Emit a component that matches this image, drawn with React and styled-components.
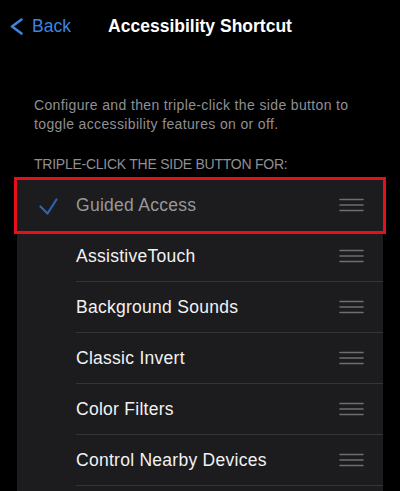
import styled, { createGlobalStyle } from "styled-components";

const GlobalStyle = createGlobalStyle`
  html, body {
    margin: 0;
    padding: 0;
    background: #000;
  }
  body {
    font-family: "Liberation Sans", Arial, sans-serif;
    -webkit-font-smoothing: antialiased;
  }
`;

const Screen = styled.div`
  width: 400px;
  height: 491px;
  overflow: hidden;
  background: #000;
`;

const NavBar = styled.div`
  height: 52px;
  display: grid;
  grid-template-columns: 1fr auto 1fr;
  align-items: center;
`;

const BackButton = styled.div`
  display: flex;
  align-items: center;
  gap: 9px;
  padding-left: 10px;
  color: #3d84e0;
  font-size: 17.5px;
`;

const Title = styled.div`
  color: #fff;
  font-size: 17.5px;
  font-weight: 700;
`;

const Description = styled.p`
  margin: 44px 0 0;
  padding: 0 30px 0 34px;
  color: #8f8f94;
  font-size: 14px;
  line-height: 19px;
  letter-spacing: 0.36px;
`;

const SectionHeader = styled.div`
  margin: 21px 0 0;
  padding: 0 34px;
  color: #8f8f94;
  font-size: 14px;
  line-height: 19px;
  letter-spacing: -0.25px;
  text-transform: uppercase;
`;

const Panel = styled.div`
  margin: 6px 17px 0;
  padding-bottom: 40px;
  background: #1c1c1e;
`;

const Row = styled.div`
  position: relative;
  height: 51px;
  display: flex;
  align-items: stretch;
  outline: ${(p) => (p.$marked ? "3px solid #e5101b" : "none")};
  outline-offset: 0;
  z-index: ${(p) => (p.$marked ? 1 : 0)};
`;

const CheckSlot = styled.div`
  width: 59px;
  display: flex;
  align-items: center;
  justify-content: flex-end;
  padding: 2px 18px 0 0;
  box-sizing: border-box;
`;

const RowBody = styled.div`
  flex: 1;
  display: flex;
  align-items: center;
  justify-content: space-between;
  padding-right: 19px;
  border-bottom: 1px solid ${(p) => (p.$plain ? "transparent" : "#343437")};
`;

const Label = styled.span`
  color: ${(p) => (p.$dim ? "#98989c" : "#f2f2f4")};
  font-size: 17.5px;
  letter-spacing: 0.27px;
`;

const Grip = () => (
  <svg width="25" height="14" viewBox="0 0 25 14">
    <g stroke="#6e6e72" strokeWidth="1.6" strokeLinecap="round">
      <line x1="1" y1="1.5" x2="24" y2="1.5" />
      <line x1="1" y1="7" x2="24" y2="7" />
      <line x1="1" y1="12.5" x2="24" y2="12.5" />
    </g>
  </svg>
);

const Check = () => (
  <svg width="19" height="17" viewBox="0 0 19 17">
    <polyline
      points="1.5,8.5 8.5,15.5 17.5,1.5"
      fill="none"
      stroke="#2e63b2"
      strokeWidth="2.2"
      strokeLinecap="round"
      strokeLinejoin="round"
    />
  </svg>
);

const items = [
  { name: "Guided Access", checked: true },
  { name: "AssistiveTouch" },
  { name: "Background Sounds" },
  { name: "Classic Invert" },
  { name: "Color Filters" },
  { name: "Control Nearby Devices" },
];

export default function App() {
  return (
    <Screen>
      <GlobalStyle />
      <NavBar>
        <BackButton>
          <svg width="13" height="17" viewBox="0 0 13 17">
            <polyline
              points="11.5,1.5 2,8.5 11.5,15.5"
              fill="none"
              stroke="#3d84e0"
              strokeWidth="2.6"
              strokeLinecap="round"
              strokeLinejoin="round"
            />
          </svg>
          Back
        </BackButton>
        <Title>Accessibility Shortcut</Title>
        <div />
      </NavBar>
      <Description>
        Configure and then triple-click the side button to toggle accessibility
        features on or off.
      </Description>
      <SectionHeader>Triple-click the side button for:</SectionHeader>
      <Panel>
        {items.map((item) => (
          <Row key={item.name} $marked={item.checked}>
            <CheckSlot>{item.checked && <Check />}</CheckSlot>
            <RowBody $plain={item.checked}>
              <Label $dim={item.checked}>{item.name}</Label>
              <Grip />
            </RowBody>
          </Row>
        ))}
      </Panel>
    </Screen>
  );
}
